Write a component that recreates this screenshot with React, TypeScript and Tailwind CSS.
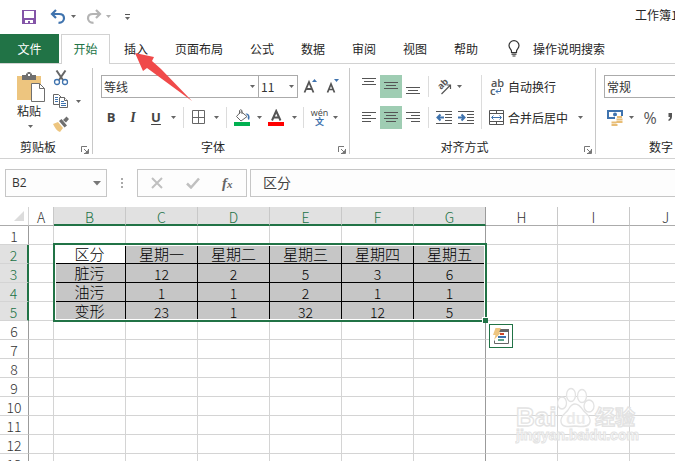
import React, { useState } from 'react';
import clsx from 'clsx';

const TABS = ['插入', '页面布局', '公式', '数据', '审阅', '视图', '帮助'];
const COLUMNS = ['A', 'B', 'C', 'D', 'E', 'F', 'G', 'H', 'I', 'J'];
const ROW_COUNT = 13;

// Cell contents, keyed by row number; the first entry goes in column B
const DATA: Record<number, string[]> = {
  2: ['区分', '星期一', '星期二', '星期三', '星期四', '星期五'],
  3: ['脏污', '12', '2', '5', '3', '6'],
  4: ['油污', '1', '1', '2', '1', '1'],
  5: ['变形', '23', '1', '32', '12', '5'],
};

const Caret = () => (
  <svg width="5" height="3" viewBox="0 0 5 3" className="shrink-0" aria-hidden="true">
    <path d="M0 0h5L2.5 3z" fill="#666" />
  </svg>
);

const CaretButton: React.FC<{ label: string; className?: string }> = ({ label, className }) => (
  <button type="button" aria-label={label} className={clsx('flex h-[23px] w-3 shrink-0 items-center justify-center', className)}>
    <Caret />
  </button>
);

interface ToolProps {
  label: string;
  className?: string;
  children: React.ReactNode;
}

const Tool: React.FC<ToolProps> = ({ label, className, children }) => (
  <button type="button" aria-label={label} className={clsx('flex h-[23px] shrink-0 items-center justify-center', className)}>
    {children}
  </button>
);

const Divider: React.FC<{ className?: string }> = ({ className }) => (
  <div className={clsx('w-px shrink-0 bg-[#dcdcdc]', className)} />
);

interface GroupProps {
  title: string;
  className?: string;
  children: React.ReactNode;
}

const Group: React.FC<GroupProps> = ({ title, className, children }) => (
  <section className={clsx('flex shrink-0 flex-col border-r border-[#c8c8c8]', className)}>
    <div className="h-[72px]">{children}</div>
    <div className="flex h-[14px] items-center">
      <span className="flex-1 text-center leading-[14px]">{title}</span>
      <button type="button" aria-label={title + '设置'} className="flex h-full w-4 items-end pl-[5px]">
        <svg width="8" height="8" viewBox="0 0 8 8" fill="none" stroke="#777" aria-hidden="true">
          <path d="M.5 6V.5H6M3 3l3.5 3.5M7.5 3v4.5H3" />
          <path d="M7 4v3H4z" fill="#777" stroke="none" />
        </svg>
      </button>
    </div>
  </section>
);

interface PickerProps {
  label: string;
  options: string[];
  className?: string;
}

const Picker: React.FC<PickerProps> = ({ label, options, className }) => (
  <div className={clsx('relative shrink-0', className)}>
    <select aria-label={label} className="block h-[23px] w-full appearance-none border border-[#ababab] bg-white pl-[2px] text-[12px] leading-[20px] text-[#333]">
      {options.map((o) => (
        <option key={o}>{o}</option>
      ))}
    </select>
    <span className="pointer-events-none absolute inset-y-0 right-1 flex items-center">
      <Caret />
    </span>
  </div>
);

// Three or four stacked strokes; every entry is [x1, x2, y]
const Lines: React.FC<{ rows: number[][] }> = ({ rows }) => (
  <svg width="14" height="17" viewBox="0 0 14 17" stroke="#555" aria-hidden="true">
    {rows.map(([a, b, y]) => (
      <path key={y} d={`M${a} ${y}.5H${b}`} />
    ))}
  </svg>
);

const TitleBar = () => (
  <header className="flex h-[34px] shrink-0 items-start pt-[9px] pl-[21px]">
    <button type="button" aria-label="保存" className="h-4 w-4">
      <svg width="16" height="16" viewBox="0 0 16 16" aria-hidden="true">
        <path d="M1 1h14v14H1z" fill="#8455a8" />
        <path d="M3 2h10v7H3zM4 11h8v3H9v-2H7v2H4z" fill="#fff" />
      </svg>
    </button>
    <button type="button" aria-label="撤消" className="ml-[13px] h-4 w-4">
      <svg width="16" height="16" viewBox="0 0 16 16" fill="none" stroke="#3f73ae" strokeWidth="2.2" aria-hidden="true">
        <path d="M6 1L2 5l4 4M2 5h7c3.500 0 5 1.800 5 4.200s-2 4.600-5.500 4.600" />
      </svg>
    </button>
    <CaretButton label="撤消选项" className="-mt-1 ml-[1px]" />
    <button type="button" aria-label="恢复" className="ml-[7px] h-4 w-4">
      <svg width="16" height="16" viewBox="0 0 16 16" fill="none" stroke="#b4b4b4" strokeWidth="2.200" aria-hidden="true">
        <path d="M10 1l4 4-4 4M14 5H7C3.500 5 2 6.800 2 9.200s2 4.600 5.500 4.600" />
      </svg>
    </button>
    <CaretButton label="恢复选项" className="-mt-1 opacity-50" />
    <button type="button" aria-label="自定义快速访问工具栏" className="ml-[11px] flex h-4 w-[5px] flex-col items-center justify-center gap-[2px]">
      <span className="h-px w-[5px] bg-[#555]" />
      <Caret />
    </button>
    <span className="ml-[505px] shrink-0 leading-[12px] whitespace-nowrap">工作簿1</span>
  </header>
);

const TabBar = () => (
  <nav className="flex h-[30px] shrink-0 border-b border-[#d2d2d2] whitespace-nowrap">
    <button type="button" className="w-[59px] shrink-0 bg-[#217346] text-white">文件</button>
    <button type="button" className="-mb-px ml-[2px] w-[49px] shrink-0 border border-b-0 border-[#d2d2d2] bg-white pb-[2px] text-[#217346]">
      开始
    </button>
    <div className="ml-px flex gap-px">
      {TABS.map((t) => (
        <button key={t} type="button" className="px-[13px]">{t}</button>
      ))}
    </div>
    <button type="button" className="ml-[17px] flex items-center gap-[13px]">
      <svg width="12" height="17" viewBox="0 0 12 17" fill="none" stroke="#333" strokeWidth="1.200" aria-hidden="true">
        <path d="M3.500 12.500v-1.300C3.500 9.500 1 8.500 1 5.600a5 5 0 0 1 10 0c0 2.900-2.500 3.900-2.500 5.600v1.300zM3.500 14.200h5M4.500 16h3" />
      </svg>
      操作说明搜索
    </button>
  </nav>
);

const ClipboardGroup = () => (
  <Group title="剪贴板" className="w-[93px]">
    <div className="flex pl-[17px]">
      <button type="button" className="flex w-[28px] flex-col items-start pt-1">
        <svg width="28" height="30" viewBox="0 0 28 30" aria-hidden="true">
          <path d="M0 4h24v24H0z" fill="#edc57f" />
          <path d="M5 3h4V1.500h1.500V0h3v1.500H15V3h4v5H5z" fill="#6f6f6f" />
          <path d="M11 2h2v2h-2z" fill="#fff" />
          <path d="M14.500 11.500h8l5 5v13h-13z" fill="#fff" stroke="#6f6f6f" />
          <path d="M22.500 11.500v5h5" fill="none" stroke="#6f6f6f" />
        </svg>
        <span className="leading-[18px] whitespace-nowrap">粘贴</span>
        <span className="flex h-3 w-[27px] items-center justify-center"><Caret /></span>
      </button>
      <div className="ml-2 flex flex-col gap-[7px] pt-[2px]">
        <button type="button" aria-label="剪切" className="h-4 w-4">
          <svg width="16" height="16" viewBox="0 0 16 16" fill="none" aria-hidden="true">
            <path d="M3.500 0.500L10 10M12.500 0.500L6 10" stroke="#666" strokeWidth="2" />
            <circle cx="4" cy="12" r="2.500" stroke="#3f73ae" strokeWidth="1.300" />
            <circle cx="12" cy="12" r="2.500" stroke="#3f73ae" strokeWidth="1.300" />
          </svg>
        </button>
        <div className="flex items-center">
          <button type="button" aria-label="复制" className="h-4 w-4">
            <svg width="16" height="16" viewBox="0 0 16 16" fill="#fff" stroke="#666" aria-hidden="true">
              <path d="M.5 1.500h5l3 3v7h-8z" />
              <path d="M2 4.500h3M2 6.500h3M2 8.500h3" stroke="#3f73ae" />
              <path d="M6.500 4.500h5l3 3v7h-8z" />
              <path d="M11.500 4.500v3h3" />
              <path d="M8 8.500h3M8 10.500h5M8 12.500h5" stroke="#3f73ae" />
            </svg>
          </button>
          <CaretButton label="复制选项" className="-my-1 ml-[3px]" />
        </div>
        <button type="button" aria-label="格式刷" className="h-4 w-4">
          <svg width="16" height="16" viewBox="0 0 16 16" aria-hidden="true">
            <path d="M5 6l5 6-3 4C4 15 2 12 0 8z" fill="#edc57f" />
            <path d="M6 5l2.500-2 5.500 6.500-2.500 2zM10 4l3.500-3.500L16 3l-3 3.500z" fill="#6f6f6f" />
          </svg>
        </button>
      </div>
    </div>
  </Group>
);

const FontGroup = () => (
  <Group title="字体" className="w-[257px]">
    <div className="flex flex-col gap-2 pt-[7px] pl-2">
      <div className="flex">
        <Picker label="字体" options={['等线', '宋体']} className="w-[158px]" />
        <Picker label="字号" options={['11', '12', '14']} className="-ml-px w-10" />
        <Tool label="增大字号" className="ml-[5px] w-4">
          <svg width="16" height="17" viewBox="0 0 16 17" aria-hidden="true">
            <path d="M1.500 14.500L6 4l4.500 10.500M3 11h6" fill="none" stroke="#555" strokeWidth="1.800" />
            <path d="M9 4l2.500-3L14 4z" fill="#3f73ae" />
          </svg>
        </Tool>
        <Tool label="减小字号" className="ml-[7px] w-4">
          <svg width="16" height="17" viewBox="0 0 16 17" aria-hidden="true">
            <path d="M1.500 14.500L5 6l3.500 8.500M3 11.500h4" fill="none" stroke="#555" strokeWidth="1.700" />
            <path d="M8 1h5l-2.500 3z" fill="#3f73ae" />
          </svg>
        </Tool>
      </div>
      <div className="flex items-center font-['Open_Sans',sans-serif] text-[13px] text-[#444]">
        <Tool label="加粗" className="w-5 font-bold">B</Tool>
        <Tool label="倾斜" className="w-6 font-['Liberation_Serif',serif] text-[14px] font-bold italic">I</Tool>
        <Tool label="下划线" className="w-[22px] font-bold underline underline-offset-2">U</Tool>
        <CaretButton label="下划线选项" />
        <Divider className="ml-1 h-[21px]" />
        <Tool label="边框" className="ml-2 w-[14px]">
          <svg width="14" height="15" viewBox="0 0 14 15" fill="none" stroke="#666" aria-hidden="true">
            <path d="M.5 .5h12v13H.5zM6.500 .5v13M.5 7.500h12" />
          </svg>
        </Tool>
        <CaretButton label="边框选项" className="ml-1" />
        <Divider className="ml-1 h-[21px]" />
        <Tool label="填充颜色" className="ml-[7px] w-4">
          <svg width="16" height="17" viewBox="0 0 16 17" aria-hidden="true">
            <path d="M7 2.500l6 5-6 4.500-4.500-4.500z" fill="#fff" stroke="#666" />
            <path d="M5.500 5V1.500Q6.500 0 8 1.500V5" fill="none" stroke="#666" />
            <path d="M11.500 4.500C15 4 16.500 7 15 11c-1.500-1-1.500-3-1-4z" fill="#3f73ae" />
            <path d="M0 13h16v4H0z" fill="#00b050" />
          </svg>
        </Tool>
        <CaretButton label="填充颜色选项" className="ml-[3px]" />
        <Tool label="字体颜色" className="ml-[3px] w-4">
          <svg width="16" height="17" viewBox="0 0 16 17" aria-hidden="true">
            <path d="M4 11.500L8.200 2 12.500 11.500M5.500 8.500h5.500" fill="none" stroke="#555" strokeWidth="2" />
            <path d="M0 13h16v4H0z" fill="#f00" />
          </svg>
        </Tool>
        <CaretButton label="字体颜色选项" className="ml-1" />
        <Divider className="ml-[3px] h-[21px]" />
        <Tool label="拼音指南" className="ml-[7px] w-[17px] flex-col">
          <span className="text-[9px] leading-[8px]">wén</span>
          <span className="font-['Noto_Sans_CJK_SC',sans-serif] text-[9px] leading-[9px] font-bold text-[#3f73ae]">文</span>
        </Tool>
        <CaretButton label="拼音指南选项" className="ml-[1px]" />
      </div>
    </div>
  </Group>
);

const AlignGroup = () => (
  <Group title="对齐方式" className="w-[246px]">
    <div className="flex pt-[7px] pl-2">
      <div className="flex w-[123px] flex-col gap-2">
        <div className="flex items-center">
          <Tool label="顶端对齐" className="w-[22px]"><Lines rows={[[0, 14, 0], [2, 12, 3], [0, 14, 6]]} /></Tool>
          <Tool label="垂直居中" className="w-[22px] bg-[#9fcdb3]"><Lines rows={[[0, 14, 4], [2, 12, 7], [0, 14, 10]]} /></Tool>
          <Tool label="底端对齐" className="w-[22px]"><Lines rows={[[0, 14, 9], [2, 12, 12], [0, 14, 15]]} /></Tool>
          <Divider className="ml-1 h-[21px]" />
          <Tool label="方向" className="ml-[7px] w-4">
            <svg width="16" height="17" viewBox="0 0 16 17" fill="none" stroke="#555" aria-hidden="true">
              <text transform="translate(5 12) rotate(-45)" fontSize="9" fontWeight="bold" fill="#555" stroke="none" className="font-['Open_Sans',sans-serif]">ab</text>
              <path d="M5.500 16L14.500 7M14.500 11V7h-4" strokeWidth="1.200" />
            </svg>
          </Tool>
          <CaretButton label="方向选项" className="ml-[1px]" />
        </div>
        <div className="flex items-center">
          <Tool label="左对齐" className="w-[22px]"><Lines rows={[[0, 14, 3], [0, 9, 6], [0, 14, 9], [0, 9, 12]]} /></Tool>
          <Tool label="居中" className="w-[22px] bg-[#9fcdb3]"><Lines rows={[[0, 14, 3], [2, 12, 6], [0, 14, 9], [2, 12, 12]]} /></Tool>
          <Tool label="右对齐" className="w-[22px]"><Lines rows={[[0, 14, 3], [5, 14, 6], [0, 14, 9], [5, 14, 12]]} /></Tool>
          <Divider className="ml-1 h-[21px]" />
          <Tool label="减少缩进量" className="ml-[7px] w-4">
            <svg width="16" height="13" viewBox="0 0 16 13" fill="none" stroke="#555" aria-hidden="true">
              <path d="M0 .5h16M9 3.500h7M9 6.500h7M9 9.500h7M0 12.500h16" />
              <path d="M8 6.500H2M4.500 3.500l-3 3 3 3" stroke="#3f73ae" strokeWidth="2" />
            </svg>
          </Tool>
          <Tool label="增加缩进量" className="ml-[6px] w-4">
            <svg width="16" height="13" viewBox="0 0 16 13" fill="none" stroke="#555" aria-hidden="true">
              <path d="M0 .5h16M9 3.500h7M9 6.500h7M9 9.500h7M0 12.500h16" />
              <path d="M0 6.500h6M3.500 3.500l3 3-3 3" stroke="#3f73ae" strokeWidth="2" />
            </svg>
          </Tool>
        </div>
      </div>
      <Divider className="h-[54px]" />
      <div className="flex flex-col gap-2 pl-[7px] whitespace-nowrap">
        <button type="button" className="flex h-[23px] items-center gap-[3px]">
          <span className="flex w-4 flex-col pl-[1px] font-['Open_Sans',sans-serif] text-[11px] leading-[8px] font-semibold text-[#555]">
            <span>ab</span>
            <span className="flex items-center">
              c
              <svg width="6" height="6" viewBox="0 0 6 6" fill="none" stroke="#3f73ae" aria-hidden="true">
                <path d="M5.500 0v3.500H1M3 1.500l-2 2 2 2" />
              </svg>
            </span>
          </span>
          自动换行
        </button>
        <div className="flex">
          <button type="button" className="flex h-[23px] items-center gap-[3px]">
            <svg width="16" height="15" viewBox="0 0 16 15" fill="none" stroke="#555" aria-hidden="true">
              <path d="M.5 .5h14v14H.5zM.5 3.500h14M.5 11.500h14M7.500 .5v3M7.500 11.500v3" />
              <path d="M3 7.500h9M4.500 5.500l-2 2 2 2M10.500 5.500l2 2-2 2" stroke="#3f73ae" />
            </svg>
            合并后居中
          </button>
          <CaretButton label="合并选项" className="ml-[6px]" />
        </div>
      </div>
    </div>
  </Group>
);

const NumberGroup = () => (
  <Group title="数字" className="w-[147px]">
    <div className="flex flex-col gap-2 pt-[7px] pl-2">
      <Picker label="数字格式" options={['常规', '数值']} className="w-[132px]" />
      <div className="flex items-center">
        <Tool label="会计数字格式" className="ml-[3px] w-4">
          <svg width="16" height="16" viewBox="0 0 16 16" aria-hidden="true">
            <path d="M0 0h16v9H0z" fill="#3f73ae" />
            <path d="M2 2h12v5H2z" fill="#fff" />
            <circle cx="8" cy="4.500" r="2" fill="#3f73ae" />
            <path d="M8 6h8v9h-5v1H4v-5h4z" fill="#fff" />
            <path d="M10 6h5v2h-5zM9.500 8.500h6v2h-6zM9.500 11h6v2h-6zM4.500 11.500h5v2h-5zM4.500 14h6v2h-6z" fill="#e8bd76" />
          </svg>
        </Tool>
        <CaretButton label="会计格式选项" className="ml-[2px]" />
        <Tool label="百分比样式" className="ml-[5px] w-4 font-['Open_Sans',sans-serif] text-[16px] font-medium text-[#555]">%</Tool>
        <Tool label="千位分隔样式" className="ml-[7px] w-[10px]">
          <svg width="6" height="10" viewBox="0 0 6 10" aria-hidden="true">
            <path d="M1.500 0h3.500v3.500C5 6 3.500 7.500 1.500 8V6.500C2.500 6 3 5 3 4H1.500z" fill="#555" />
          </svg>
        </Tool>
      </div>
    </div>
  </Group>
);

const FormulaBar = () => (
  <div className="flex shrink-0 py-[10px] pl-[5px]">
    <div className="flex h-7 w-[102px] shrink-0 items-center border border-[#c6c6c6] bg-[#fdfdfd] pr-1">
      <input aria-label="名称框" defaultValue="B2" className="w-full min-w-0 pl-[6px] font-['Open_Sans',sans-serif] text-[12px] text-[#333] outline-none" />
      <button type="button" aria-label="名称列表" className="flex w-3 justify-center">
        <svg width="8" height="5" viewBox="0 0 8 5" aria-hidden="true"><path d="M0 0h8L4 4.500z" fill="#777" /></svg>
      </button>
    </div>
    <div className="flex w-[30px] shrink-0 flex-col items-center justify-center gap-[2px]">
      <i className="h-[2px] w-[2px] bg-[#aaa]" />
      <i className="h-[2px] w-[2px] bg-[#aaa]" />
      <i className="h-[2px] w-[2px] bg-[#aaa]" />
    </div>
    <div className="flex h-7 w-[110px] shrink-0 items-center border border-[#c6c6c6] bg-[#fdfdfd] pl-[13px]">
      <button type="button" aria-label="取消">
        <svg width="12" height="12" viewBox="0 0 12 12" fill="none" stroke="#c0c0c0" strokeWidth="2" aria-hidden="true">
          <path d="M1 1l10 10M11 1L1 11" />
        </svg>
      </button>
      <button type="button" aria-label="输入" className="ml-[23px]">
        <svg width="14" height="12" viewBox="0 0 14 12" fill="none" stroke="#c0c0c0" strokeWidth="2.500" aria-hidden="true">
          <path d="M1 6.500l4 4L13 1.500" />
        </svg>
      </button>
      <button type="button" aria-label="插入函数" className="ml-[22px] font-['Liberation_Serif',serif] text-[15px] leading-[20px] font-bold text-[#666] italic">
        f<span className="text-[11px]">x</span>
      </button>
    </div>
    <input aria-label="编辑栏" defaultValue="区分" className="ml-[3px] h-7 min-w-0 flex-1 border border-r-0 border-[#c6c6c6] bg-[#fdfdfd] pb-[2px] pl-3 text-[14px] text-[#444] outline-none" />
  </div>
);

const Sheet = () => {
  const [quickOpen, setQuickOpen] = useState(false);

  const isSelectedCol = (c: number) => c >= 1 && c <= 6;
  const isSelectedRow = (r: number) => r >= 2 && r <= 5;

  return (
    <main className="relative flex-1">
      <table className="w-[702px] table-fixed border-separate border-spacing-0 text-center text-[14px] leading-[18px] font-light text-[#333]">
        <colgroup>
          <col className="w-[29px]" />
          {COLUMNS.map((c) => (
            <col key={c} className={c === 'A' ? 'w-[25px]' : 'w-[72px]'} />
          ))}
        </colgroup>
        <thead>
          <tr className="h-[19px]">
            <td className="border-r border-b border-r-[#d4d4d4] border-b-[#ababab] p-0">
              <svg width="10" height="10" viewBox="0 0 10 10" className="ml-[14px]" aria-hidden="true">
                <path d="M10 0v10H0z" fill="#dcdcdc" />
              </svg>
            </td>
            {COLUMNS.map((name, c) => (
              <th
                key={name}
                scope="col"
                className={clsx(
                  'h-[19px] border-r p-0 font-light',
                  name === 'G' ? 'border-r-[#9b9b9b]' : 'border-r-[#c8c8c8]',
                  isSelectedCol(c)
                    ? 'border-b-2 border-b-[#217346] bg-[#e1e1e1] pt-[3px] leading-[14px] text-[#217346]'
                    : 'border-b border-b-[#ababab] pt-[3px] leading-[15px]',
                )}
              >
                {name}
              </th>
            ))}
          </tr>
        </thead>
        <tbody>
          {Array.from({ length: ROW_COUNT }, (_, i) => i + 1).map((r) => (
            <tr key={r} className="h-[19px]">
              <th
                scope="row"
                className={clsx(
                  'h-[19px] border-b border-b-[#d4d4d4] p-0 pt-[2px] leading-[16px] font-light',
                  isSelectedRow(r) ? 'border-r-2 border-r-[#217346] bg-[#e1e1e1] text-[#217346]' : 'border-r border-r-[#9b9b9b]',
                )}
              >
                {r}
              </th>
              {COLUMNS.map((name, c) => {
                const filled = isSelectedRow(r) && isSelectedCol(c);
                const isLabel = c === 1 || r === 2;
                const text = filled ? DATA[r][c - 1] : '';
                return (
                  <td
                    key={name}
                    className={clsx(
                      'h-[19px] border-r border-b p-0',
                      filled && 'border-black text-black',
                      filled && (name === 'B' && r === 2 ? 'bg-white' : 'bg-[#c6c6c6]'),
                      !filled && 'border-b-[#d4d4d4]',
                      !filled && (name === 'G' ? 'border-r-[#9b9b9b]' : 'border-r-[#d4d4d4]'),
                      isLabel ? 'text-[15px]' : 'pt-[2px] leading-[16px]',
                    )}
                  >
                    {text}
                  </td>
                );
              })}
            </tr>
          ))}
        </tbody>
      </table>

      {/* Selection frame with its fill handle */}
      <div className="pointer-events-none absolute top-[36px] left-[53px] h-[79px] w-[434px] border-2 border-[#217346]">
        <div className="h-full border border-white" />
        <div className="absolute -right-[3px] -bottom-[3px] h-[6px] w-[6px] border-t border-l border-white bg-[#217346]" />
      </div>

      <button
        type="button"
        aria-label="快速分析"
        aria-expanded={quickOpen}
        onClick={() => setQuickOpen(!quickOpen)}
        className="absolute top-[117px] left-[489px] flex h-6 w-6 items-center justify-center border border-[#217346] bg-white"
      >
        <svg width="16" height="16" viewBox="0 0 16 16" aria-hidden="true">
          <path d="M6 1.500h9.500v14H1.500v-3" fill="none" stroke="#666" />
          <path d="M6 1h10v3H6z" fill="#666" />
          <path d="M2.500 0H8L6 4.500h2L1 12l1.500-5H0z" fill="#edc57f" />
          <path d="M7 5h4v2H7z" fill="#d24726" />
          <path d="M5 8h8v2H5z" fill="#3f73ae" />
          <path d="M5 11h6v2H5z" fill="#5ba487" />
        </svg>
      </button>
    </main>
  );
};

const Watermark = () => (
  <svg
    width="124"
    height="64"
    viewBox="0 0 124 64"
    className="pointer-events-none absolute top-[386px] left-[515px] font-['Liberation_Sans','Noto_Sans_CJK_SC',sans-serif] font-bold"
    fill="#fff"
    fillOpacity="0.700"
    stroke="#e3e3e3"
    strokeWidth="1.300"
    aria-hidden="true"
  >
    <text x="1" y="40" fontSize="26">Bai</text>
    <ellipse cx="47" cy="17" rx="4.500" ry="6" />
    <ellipse cx="56" cy="9" rx="4.500" ry="6.500" />
    <ellipse cx="67" cy="10" rx="4.500" ry="6.500" />
    <ellipse cx="74" cy="20" rx="5" ry="6" />
    <path d="M60 18c4 0 6 3 8 6 3 4 8 6 7 12-1 5-7 5-15 4-8 1-13 1-14-4-1-6 4-8 7-12 2-3 3-6 7-6z" />
    <text x="51" y="38" fontSize="16" fill="#e3e3e3" stroke="none">du</text>
    <text x="80" y="39" fontSize="20">经验</text>
    <text x="1" y="54" fontSize="14" strokeWidth="1">jingyan.baidu.com</text>
  </svg>
);

const App: React.FC = () => {
  return (
    <div className="relative flex h-screen flex-col overflow-hidden bg-white font-['Noto_Sans_CJK_SC',sans-serif] text-[12px] text-[#262626]">
      <TitleBar />
      <TabBar />
      <div className="flex shrink-0 border-b border-[#d2d2d2] py-1">
        <ClipboardGroup />
        <FontGroup />
        <AlignGroup />
        <NumberGroup />
      </div>
      <FormulaBar />
      <Sheet />

      {/* Pointer to the insert tab */}
      <svg width="58" height="49" viewBox="0 0 58 49" className="pointer-events-none absolute top-[53px] left-[135px]" aria-hidden="true">
        <path d="M0 0l19 4-2 4 9 8 31 32L12 15l-4 3z" fill="#f04a4a" />
      </svg>
      <Watermark />
    </div>
  );
};

export default App;
